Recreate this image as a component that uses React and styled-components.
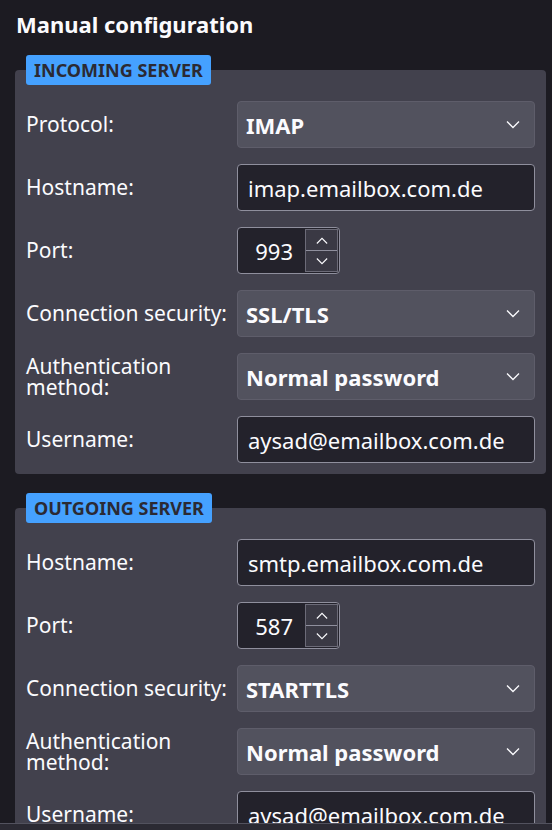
import React from 'react';
import styled, { createGlobalStyle } from 'styled-components';

const GlobalStyle = createGlobalStyle`
  html, body {
    margin: 0;
    padding: 0;
    background: #1c1b22;
    font-family: 'Noto Sans', 'Open Sans', sans-serif;
    color: #fbfbfe;
  }
`;

const Page = styled.div`
  height: 830px;
  display: flex;
  flex-direction: column;
  overflow: hidden;
`;

const Scroller = styled.div`
  flex: 1;
  overflow: hidden;
  padding: 0 6px 0 15px;
`;

const Footer = styled.div`
  height: 6px;
  flex: none;
  background: #2b2a33;
  border-top: 1px solid #52525e;
`;

const Title = styled.h1`
  margin: 0;
  padding: 9px 0 0 1px;
  font-size: 22px;
  font-weight: 700;
  line-height: 30px;
`;

const Section = styled.section`
  display: flex;
  flex-direction: column;
  margin-top: ${(p) => p.gap}px;
`;

const Badge = styled.div`
  align-self: flex-start;
  position: relative;
  z-index: 1;
  margin: 0 0 -15px 11px;
  height: 30px;
  padding: 0 8px;
  display: flex;
  align-items: center;
  background: #45a1ff;
  color: #2b2a33;
  border-radius: 3px;
  font-size: 18px;
  font-weight: 700;
`;

const Panel = styled.div`
  background: #42414d;
  border-radius: 4px;
  padding: 31px 11px 11px;
  display: grid;
  grid-template-columns: 211px 1fr;
  row-gap: 16px;
`;

const Label = styled.label`
  align-self: center;
  font-size: 21px;
  line-height: 21px;
  color: #fbfbfe;
`;

const Select = styled.div`
  height: 47px;
  box-sizing: border-box;
  display: flex;
  align-items: center;
  justify-content: space-between;
  padding: 0 14px 0 8px;
  background: #52525e;
  border: 1px solid #5e5d6a;
  border-radius: 4px;
  font-size: 22px;
  font-weight: 700;
`;

const Input = styled.div`
  height: 47px;
  box-sizing: border-box;
  display: flex;
  align-items: center;
  padding: 0 10px;
  background: #23222b;
  border: 1px solid #8f8f9d;
  border-radius: 4px;
  font-size: 22px;
`;

const PortBox = styled.div`
  width: 103px;
  height: 47px;
  box-sizing: border-box;
  display: flex;
  align-items: center;
  background: #23222b;
  border: 1px solid #8f8f9d;
  border-radius: 4px;
  font-size: 22px;
  padding: 1px 1px 1px 0;
`;

const PortValue = styled.span`
  flex: 1;
  text-align: right;
  padding-right: 12px;
`;

const Spinner = styled.div`
  display: flex;
  flex-direction: column;
  gap: 1px;
  width: 33px;
  height: 43px;
  background: #8f8f9d;
  border: 1px solid #6c6b78;
  box-sizing: border-box;
`;

const SpinButton = styled.div`
  flex: 1;
  background: #3a3944;
  display: flex;
  align-items: center;
  justify-content: center;
`;

const Chevron = ({ up, size = 13 }) => (
  <svg width={size} height={size / 2 + 1} viewBox="0 0 14 8" fill="none">
    <path
      d={up ? 'M1 7.5L7 1.5L13 7.5' : 'M1 0.5L7 6.5L13 0.5'}
      stroke="#fbfbfe"
      strokeWidth="1.3"
    />
  </svg>
);

const Field = ({ row }) => {
  if (row.type === 'select') {
    return (
      <Select>
        <span>{row.value}</span>
        <Chevron size={14} />
      </Select>
    );
  }
  if (row.type === 'port') {
    return (
      <PortBox>
        <PortValue>{row.value}</PortValue>
        <Spinner>
          <SpinButton>
            <Chevron up size={12} />
          </SpinButton>
          <SpinButton>
            <Chevron size={12} />
          </SpinButton>
        </Spinner>
      </PortBox>
    );
  }
  return <Input>{row.value}</Input>;
};

const sections = [
  {
    title: 'INCOMING SERVER',
    gap: 16,
    rows: [
      { label: 'Protocol:', type: 'select', value: 'IMAP' },
      { label: 'Hostname:', type: 'text', value: 'imap.emailbox.com.de' },
      { label: 'Port:', type: 'port', value: '993' },
      { label: 'Connection security:', type: 'select', value: 'SSL/TLS' },
      { label: ['Authentication', 'method:'], type: 'select', value: 'Normal password' },
      { label: 'Username:', type: 'text', value: 'aysad@emailbox.com.de' },
    ],
  },
  {
    title: 'OUTGOING SERVER',
    gap: 19,
    rows: [
      { label: 'Hostname:', type: 'text', value: 'smtp.emailbox.com.de' },
      { label: 'Port:', type: 'port', value: '587' },
      { label: 'Connection security:', type: 'select', value: 'STARTTLS' },
      { label: ['Authentication', 'method:'], type: 'select', value: 'Normal password' },
      { label: 'Username:', type: 'text', value: 'aysad@emailbox.com.de' },
    ],
  },
];

const App = () => (
  <>
    <GlobalStyle />
    <Page>
      <Scroller>
        <Title>Manual configuration</Title>
        {sections.map((section) => (
          <Section key={section.title} gap={section.gap}>
            <Badge>{section.title}</Badge>
            <Panel>
              {section.rows.map((row, i) => (
                <React.Fragment key={i}>
                  <Label>
                    {Array.isArray(row.label)
                      ? row.label.map((l) => <div key={l}>{l}</div>)
                      : row.label}
                  </Label>
                  <Field row={row} />
                </React.Fragment>
              ))}
            </Panel>
          </Section>
        ))}
      </Scroller>
      <Footer />
    </Page>
  </>
);

export default App;
